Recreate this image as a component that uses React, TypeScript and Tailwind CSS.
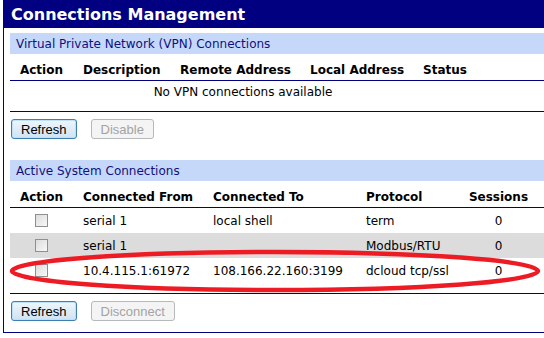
const font = { fontFamily: '"DejaVu Sans", Verdana, sans-serif' };

const Checkbox = () => (
  <span className="inline-block h-[13px] w-[13px] border border-[#8f8f8f] bg-gradient-to-br from-[#dcdcdc] to-[#f8f8f8]" />
);

const Button = ({ label, disabled }: { label: string; disabled?: boolean }) => (
  <button
    className={
      disabled
        ? 'h-[20px] rounded-[3px] border border-[#b5b9bc] bg-[#f4f4f4] px-[9px] text-[13px] leading-none text-[#a3a3a3]'
        : 'h-[20px] rounded-[3px] border border-[#3c7fb1] bg-gradient-to-b from-[#eef6fc] to-[#cfe3f2] px-[9px] text-[13px] leading-none text-black shadow-[inset_0_0_0_1px_#bfe0f7]'
    }
    style={{ fontFamily: '"Liberation Sans", Arial, sans-serif' }}
  >
    {label}
  </button>
);

const SectionHead = ({ title }: { title: string }) => (
  <div className="flex h-[21px] items-center bg-[#c6d8fa] pl-[6px] text-[12px] text-[#101080]">
    {title}
  </div>
);

const vpnCols = [
  { label: 'Action', w: 'w-[63px] text-center' },
  { label: 'Description', w: 'w-[97px] pl-[10px]' },
  { label: 'Remote Address', w: 'w-[130px] pl-[10px]' },
  { label: 'Local Address', w: 'w-[113px] pl-[10px]' },
  { label: 'Status', w: 'w-[100px] pl-[10px]' },
];

const sysCols = [
  'w-[63px] flex justify-center',
  'w-[130px] pl-[10px]',
  'w-[153px] pl-[10px]',
  'w-[103px] pl-[10px]',
  'w-[79px] text-center',
];

const sysHeads = ['Action', 'Connected From', 'Connected To', 'Protocol', 'Sessions'];

const connections = [
  { from: 'serial 1', to: 'local shell', protocol: 'term', sessions: '0' },
  { from: 'serial 1', to: '', protocol: 'Modbus/RTU', sessions: '0' },
  { from: '10.4.115.1:61972', to: '108.166.22.160:3199', protocol: 'dcloud tcp/ssl', sessions: '0' },
];

export default function App() {
  return (
    <div className="relative h-[338px] w-[544px] overflow-hidden bg-white" style={font}>
      <div className="ml-[3px] w-[600px] border-b border-l border-[#000080] pb-[11px]">
        <div className="flex h-[28px] items-center bg-[#000080] pl-[7px] pt-[1px] text-[16px] font-bold text-white">
          Connections Management
        </div>

        <div className="mt-[5px] pl-[6px]">
          <SectionHead title="Virtual Private Network (VPN) Connections" />
          <div className="border-b border-[#000080] pb-[8px]">
            <div className="flex h-[27px] items-center border-b border-[#000080] pt-[6px] text-[12px] font-bold text-black">
              {vpnCols.map((c) => (
                <div key={c.label} className={c.w}>
                  {c.label}
                </div>
              ))}
            </div>
            <div className="flex h-[22px] w-[466px] items-center justify-center text-[12px] text-black">
              No VPN connections available
            </div>
          </div>
          <div className="mt-[7px] flex gap-[14px] pl-[1px]">
            <Button label="Refresh" />
            <Button label="Disable" disabled />
          </div>

          <div className="mt-[21px]">
            <SectionHead title="Active System Connections" />
          </div>
          <div className="border-b border-[#000080] pb-[10px]">
            <div className="flex h-[27px] items-center border-b border-[#000080] pt-[6px] text-[12px] font-bold text-black">
              {sysHeads.map((h, i) => (
                <div key={h} className={sysCols[i]}>
                  {h}
                </div>
              ))}
            </div>
            {connections.map((c, idx) => (
              <div
                key={idx}
                className={`flex h-[25px] items-center text-[12px] text-black ${idx === 1 ? 'bg-[#dcdcdc]' : ''}`}
              >
                <div className={sysCols[0]}>
                  <Checkbox />
                </div>
                <div className={sysCols[1]}>{c.from}</div>
                <div className={sysCols[2]}>{c.to}</div>
                <div className={sysCols[3]}>{c.protocol}</div>
                <div className={sysCols[4]}>{c.sessions}</div>
              </div>
            ))}
          </div>
          <div className="mt-[7px] flex gap-[14px] pl-[1px]">
            <Button label="Refresh" />
            <Button label="Disconnect" disabled />
          </div>
        </div>
      </div>

      <svg className="pointer-events-none absolute left-0 top-0" width="544" height="338" viewBox="0 0 544 338">
        <ellipse cx="275" cy="271" rx="263" ry="19" fill="none" stroke="#ed1c24" strokeWidth="4.5" />
      </svg>
    </div>
  );
}
